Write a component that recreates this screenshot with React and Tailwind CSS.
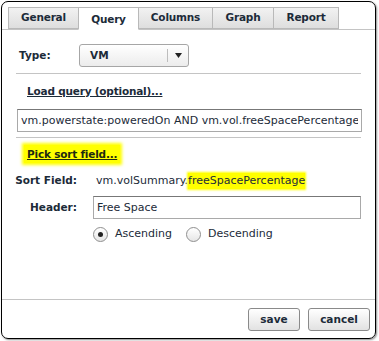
import { useState } from 'react';

const TABS = ['General', 'Query', 'Columns', 'Graph', 'Report'];
const TAB_WIDTHS = {
    General: 'w-[71px]',
    Query: 'w-[61px]',
    Columns: 'w-[75px]',
    Graph: 'w-[62px]',
    Report: 'w-[66px]',
};

const font = { fontFamily: '"DejaVu Sans", Verdana, sans-serif' };

function Radio( { checked, label, onClick } ) {
    return (
        <button type="button" onClick={ onClick } className="flex items-center gap-[7px]">
            <span className="w-[15px] h-[15px] rounded-full border border-[#8f8f8f] bg-gradient-to-b from-white to-[#e6e6e6] flex items-center justify-center">
                { checked && <span className="w-[5px] h-[5px] rounded-full bg-[#222]" /> }
            </span>
            <span className="text-[#1c2b39]">{ label }</span>
        </button>
    );
}

function Button( { children, className } ) {
    return (
        <button
            type="button"
            className={ `h-[23px] rounded-[3px] border border-[#8a8a8a] bg-gradient-to-b from-white to-[#e2e2e2] font-bold text-[10.5px] text-[#1c2b39] ${ className }` }
        >
            { children }
        </button>
    );
}

function Label( { children } ) {
    return (
        <span className="w-[61px] shrink-0 flex justify-end">
            <span className="shrink-0 whitespace-nowrap font-bold text-[10.5px]">{ children }</span>
        </span>
    );
}

export default function App() {
    const [ tab, setTab ] = useState( 'Query' );
    const [ order, setOrder ] = useState( 'asc' );
    const [ query, setQuery ] = useState( 'vm.powerstate:poweredOn AND vm.vol.freeSpacePercentage' );
    const [ header, setHeader ] = useState( 'Free Space' );

    return (
        <div className="w-[379px] h-[341px] bg-white text-[11px] text-[#1c2b39]" style={ font }>
            <div className="ml-[1px] mt-[1px] w-[375px] h-[338px] border border-black rounded-[7px] shadow-[1px_1px_2px_rgba(0,0,0,0.45)] flex flex-col overflow-hidden">
                {/* Tabs */}
                <div className="flex pl-[6px] pt-[5px] h-[27px]">
                    { TABS.map( ( t ) => (
                        <button
                            key={ t }
                            type="button"
                            onClick={ () => setTab( t ) }
                            className={ `${ TAB_WIDTHS[ t ] } h-[22px] font-bold text-[10.5px] tracking-[-0.2px] border border-[#b9b9b9] -ml-px first:ml-0 ${
                                tab === t
                                    ? 'bg-white border-b-white relative z-10 h-[23px] pt-[3px]'
                                    : 'bg-gradient-to-b from-[#f2f2f2] to-[#dedede]'
                            }` }
                        >
                            { t }
                        </button>
                    ) ) }
                </div>

                <div className="flex-1 border-t border-[#c4c4c4] px-[14px] flex flex-col">
                    {/* Type */}
                    <div className="flex items-center mt-[14px]">
                        <span className="font-bold text-[10.5px] w-[63px] pl-[3px]">Type:</span>
                        <div className="w-[110px] h-[23px] rounded-[3px] border border-[#a6a6a6] bg-gradient-to-b from-white to-[#ececec] flex items-center">
                            <span className="flex-1 pl-[10px] font-bold text-[10.5px]">VM</span>
                            <span className="w-px h-[13px] bg-[#bdbdbd]" />
                            <span className="w-[20px] flex justify-center">
                                <svg width="7" height="5" viewBox="0 0 7 5">
                                    <path d="M0 0h7L3.5 5z" fill="#222" />
                                </svg>
                            </span>
                        </div>
                    </div>

                    <div className="mt-[6px] border-t border-[#c4c4c4]" />

                    {/* Load query */}
                    <a className="mt-[10px] ml-[11px] font-bold text-[10.5px] tracking-[-0.2px] underline self-start leading-[14px]">Load query (optional)...</a>
                    <input
                        value={ query }
                        onChange={ ( e ) => setQuery( e.target.value ) }
                        className="mt-[11px] ml-px h-[23px] w-[345px] border border-[#a9a9a9] border-t-[#777] px-[3px] outline-none text-[#1c2b39]"
                    />

                    <div className="mt-[5px] border-t border-[#c4c4c4]" />

                    {/* Sort */}
                    <a className="mt-[7px] ml-[8px] self-start bg-[#ffff00] shadow-[0_0_3px_2px_#ffff00] px-[3px] leading-[18px] font-bold text-[10.5px] tracking-[-0.2px] underline text-[#1d2a10]">
                        Pick sort field...
                    </a>

                    <div className="flex items-center mt-[9px] h-[18px]">
                        <Label>Sort Field:</Label>
                        <span className="ml-[19px]">vm.volSummary.</span>
                        <span className="bg-[#ffff00] shadow-[0_0_2px_1px_#ffff00] leading-[16px]">freeSpacePercentage</span>
                    </div>

                    <div className="flex items-center mt-[6px]">
                        <Label>Header:</Label>
                        <input
                            value={ header }
                            onChange={ ( e ) => setHeader( e.target.value ) }
                            className="ml-[16px] h-[23px] w-[268px] border border-[#a9a9a9] border-t-[#777] px-[3px] outline-none text-[#1c2b39]"
                        />
                    </div>

                    <div className="flex items-center gap-[14px] mt-[7px] ml-[77px]">
                        <Radio checked={ order === 'asc' } label="Ascending" onClick={ () => setOrder( 'asc' ) } />
                        <Radio checked={ order === 'desc' } label="Descending" onClick={ () => setOrder( 'desc' ) } />
                    </div>
                </div>

                {/* Footer */}
                <div className="h-[39px] border-t border-[#c4c4c4] flex justify-end items-start pt-[8px] pr-[5px] gap-[8px]">
                    <Button className="w-[52px]">save</Button>
                    <Button className="w-[62px]">cancel</Button>
                </div>
            </div>
        </div>
    );
}
